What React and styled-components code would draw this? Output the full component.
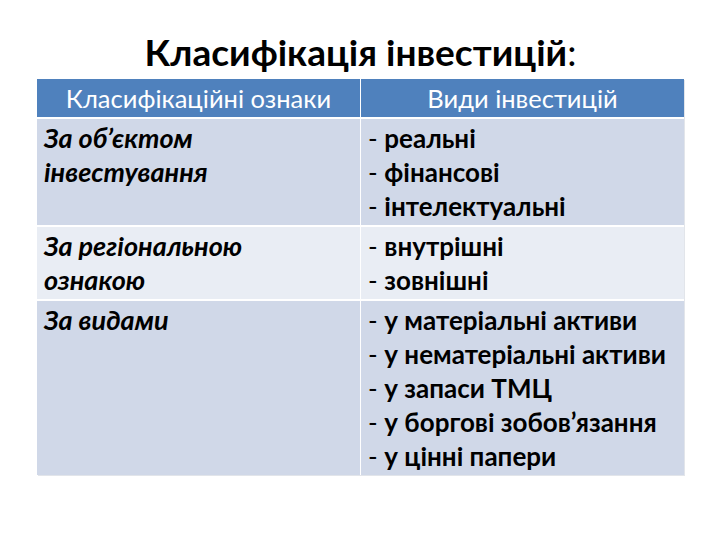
import React from 'react';
import styled, { createGlobalStyle } from 'styled-components';

const Global = createGlobalStyle`
  body {
    margin: 0;
    background: #fff;
    font-family: "Lato", "Noto Sans", sans-serif;
    color: #000;
  }
`;

const Slide = styled.div`
  width: 720px;
  height: 540px;
  box-sizing: border-box;
  padding: 29px 36px 0 37px;
  display: flex;
  flex-direction: column;
  align-items: stretch;
`;

const Title = styled.h1`
  margin: 0 0 4px;
  font-size: 37px;
  line-height: 46px;
  font-weight: 700;
  text-align: center;
`;

const Colon = styled.span`
  font-weight: 400;
`;

const Table = styled.div`
  display: grid;
  grid-template-columns: 323px 323px;
  column-gap: 1px;
  row-gap: 2px;
  background: #fff;
  box-shadow: 1px 1px 0 #e2e5ea;
`;

const Head = styled.div`
  background: #4f81bd;
  color: #fff;
  font-size: 25.5px;
  line-height: 38px;
  font-weight: 400;
  text-align: center;
`;

const Cell = styled.div`
  background: ${(p) => (p.$even ? '#e9edf4' : '#d0d8e8')};
  padding: 2px 7px;
  font-size: ${(p) => (p.$italic ? '27px' : '26px')};
  line-height: 34px;
  font-weight: 700;
  font-style: ${(p) => (p.$italic ? 'italic' : 'normal')};
`;

const Item = styled.div`
  white-space: nowrap;
`;

const Dash = styled.span`
  font-weight: 400;
`;

const rows = [
  { label: ['За об’єктом', 'інвестування'], kinds: ['реальні', 'фінансові', 'інтелектуальні'] },
  { label: ['За регіональною', 'ознакою'], kinds: ['внутрішні', 'зовнішні'] },
  {
    label: ['За видами'],
    kinds: [
      'у матеріальні активи',
      'у нематеріальні активи',
      'у запаси ТМЦ',
      'у боргові зобов’язання',
      'у цінні папери',
    ],
  },
];

export default function App() {
  return (
    <>
      <Global />
      <Slide>
        <Title>
          Класифікація інвестицій<Colon>:</Colon>
        </Title>
        <Table>
          <Head>Класифікаційні ознаки</Head>
          <Head>Види інвестицій</Head>
          {rows.map((r, i) => (
            <React.Fragment key={i}>
              <Cell $italic $even={i % 2 === 1}>
                {r.label.map((l) => (
                  <Item key={l}>{l}</Item>
                ))}
              </Cell>
              <Cell $even={i % 2 === 1}>
                {r.kinds.map((k) => (
                  <Item key={k}>
                    <Dash>- </Dash>
                    {k}
                  </Item>
                ))}
              </Cell>
            </React.Fragment>
          ))}
        </Table>
      </Slide>
    </>
  );
}
